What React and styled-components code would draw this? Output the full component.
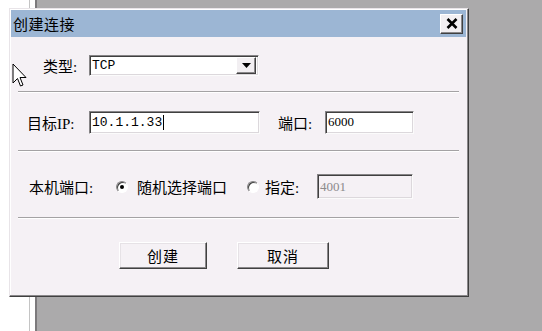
import styled, { createGlobalStyle } from "styled-components";

const Global = createGlobalStyle`
  html, body {
    margin: 0;
    padding: 0;
    background: #ffffff;
  }
  #root {
    width: 542px;
    height: 331px;
    overflow: hidden;
  }
`;

const Desktop = styled.div`
  position: relative;
  display: flex;
  width: 542px;
  height: 331px;
  background: #ffffff;
`;

const LeftPane = styled.div`
  width: 29px;
  border-right: 1px solid #c4c4c4;
  margin-right: 5px;
  background: #ffffff;
`;

const GrayPane = styled.div`
  flex: 1;
  border-left: 2px solid #7c7a7c;
  background: #abaaab;
`;

const Dialog = styled.div`
  position: absolute;
  left: 9px;
  top: 8px;
  width: 460px;
  height: 289px;
  box-sizing: border-box;
  display: flex;
  flex-direction: column;
  background: #f5f1f5;
  border: 1px solid;
  border-color: #e8e4e8 #404040 #404040 #e8e4e8;
  box-shadow: inset -1px -1px #8a888a, inset 1px 1px #ffffff;
  padding: 1px 2px 2px 1px;
  font-family: "Noto Sans CJK SC", "Liberation Sans", sans-serif;
  color: #000;
`;

const TitleBar = styled.div`
  height: 27px;
  display: flex;
  align-items: center;
  justify-content: space-between;
  background: #9cb6d4;
  padding: 0 3px 0 2px;
  font-size: 15px;
  letter-spacing: 0.5px;
`;

const CloseButton = styled.div`
  width: 23px;
  height: 20px;
  box-sizing: border-box;
  display: flex;
  align-items: center;
  justify-content: center;
  background: #f2eff2;
  border: 1px solid;
  border-color: #ffffff #404040 #404040 #ffffff;
  box-shadow: inset -1px -1px #8a888a;
  svg {
    display: block;
  }
`;

const Section = styled.div`
  height: ${(p) => p.$h}px;
  box-sizing: border-box;
  padding-top: ${(p) => p.$pt || 0}px;
  display: flex;
  align-items: center;
  padding-left: ${(p) => p.$pl || 0}px;
`;

const Separator = styled.div`
  margin: 0 7px;
  height: 1px;
  background: #a4a2a4;
  border-bottom: 1px solid #ffffff;
`;

const Label = styled.span`
  width: ${(p) => p.$w}px;
  margin-left: ${(p) => p.$ml || 0}px;
  flex: none;
  font-size: 15px;
  font-family: "Liberation Serif", "Noto Sans CJK SC", serif;
  white-space: nowrap;
  span {
    font-family: "Noto Sans CJK SC", sans-serif;
  }
`;

const Field = styled.div`
  width: ${(p) => p.$w}px;
  height: ${(p) => p.$h || 23}px;
  flex: none;
  box-sizing: border-box;
  display: flex;
  align-items: center;
  padding-left: 2px;
  background: ${(p) => (p.$disabled ? "#f5f1f5" : "#ffffff")};
  color: ${(p) => (p.$disabled ? "#8c8a8c" : "#000")};
  border: 1px solid;
  border-color: #868486 #fbfbfb #fbfbfb #868486;
  box-shadow: inset 1px 1px #404040, inset -1px -1px #dcd8dc;
  font-family: ${(p) => (p.$mono ? '"Liberation Mono", monospace' : '"Liberation Serif", serif')};
  font-size: 13px;
`;

const Caret = styled.span`
  display: inline-block;
  width: 1px;
  height: 15px;
  background: #000;
  margin-left: 1px;
`;

const SelectBox = styled(Field)`
  padding-right: 2px;
  justify-content: space-between;
`;

const DropButton = styled.div`
  width: 20px;
  height: 17px;
  box-sizing: border-box;
  display: flex;
  align-items: center;
  justify-content: center;
  background: #f2eff2;
  border: 1px solid;
  border-color: #ffffff #404040 #404040 #ffffff;
  box-shadow: inset -1px -1px #8a888a;
`;

const Radio = styled.span`
  width: 12px;
  height: 12px;
  flex: none;
  box-sizing: border-box;
  border-radius: 50%;
  border: 1px solid;
  border-color: #868486 #ffffff #ffffff #868486;
  background: #ffffff;
  box-shadow: inset 1px 1px #404040;
  display: flex;
  align-items: center;
  justify-content: center;
  margin-right: ${(p) => p.$mr}px;
  &::after {
    content: "";
    width: 4px;
    height: 4px;
    border-radius: 50%;
    background: ${(p) => (p.$on ? "#000" : "transparent")};
  }
`;

const ButtonRow = styled.div`
  display: flex;
  padding: 23px 0 0 108px;
  gap: 30px;
`;

const Button = styled.div`
  width: ${(p) => p.$w}px;
  height: 27px;
  box-sizing: border-box;
  display: flex;
  align-items: center;
  justify-content: center;
  background: #f5f1f5;
  border: 1px solid;
  border-color: #ffffff #404040 #404040 #ffffff;
  box-shadow: inset -1px -1px #8a888a, inset 1px 1px #e6e2e6;
  font-size: 15px;
  letter-spacing: 1px;
`;

const Cursor = styled.svg`
  position: absolute;
  left: 12px;
  top: 63px;
`;

export default function App() {
  return (
    <>
      <Global />
      <Desktop>
        <LeftPane />
        <GrayPane />
        <Dialog>
          <TitleBar>
            <span>创建连接</span>
            <CloseButton>
              <svg width="12" height="11" viewBox="0 0 12 11">
                <path d="M1.5 1 L10.5 10 M10.5 1 L1.5 10" stroke="#000" strokeWidth="2.6" />
              </svg>
            </CloseButton>
          </TitleBar>
          <Section $h={54} $pt={2} $pl={32}>
            <Label $w={46}>
              <span>类型</span>:
            </Label>
            <SelectBox $w={170} $h={21} $mono>
              <span>TCP</span>
              <DropButton>
                <svg width="9" height="5" viewBox="0 0 9 5">
                  <path d="M0 0 H9 L4.5 5 Z" fill="#000" />
                </svg>
              </DropButton>
            </SelectBox>
          </Section>
          <Separator />
          <Section $h={57} $pt={1} $pl={16}>
            <Label $w={62}>
              <span>目标</span>IP:
            </Label>
            <Field $w={171} $mono>
              10.1.1.33
              <Caret />
            </Field>
            <Label $w={47} $ml={18}>
              <span>端口</span>:
            </Label>
            <Field $w={89}>6000</Field>
          </Section>
          <Separator />
          <Section $h={65} $pt={4} $pl={18}>
            <Label $w={87}>
              <span>本机端口</span>:
            </Label>
            <Radio $on $mr={9} />
            <Label $w={110}>
              <span>随机选择端口</span>
            </Label>
            <Radio $mr={6} />
            <Label $w={52}>
              <span>指定</span>:
            </Label>
            <Field $w={96} $h={25} $disabled>
              4001
            </Field>
          </Section>
          <Separator />
          <ButtonRow>
            <Button $w={88}>创建</Button>
            <Button $w={92}>取消</Button>
          </ButtonRow>
        </Dialog>
        <Cursor width="15" height="25" viewBox="0 0 15 25">
          <path
            d="M1 1 L1 20 L5.5 15.5 L8.5 23 L11 22 L8 14.5 L14 14.5 Z"
            fill="#ffffff"
            stroke="#000"
            strokeWidth="1"
            strokeLinejoin="miter"
          />
        </Cursor>
      </Desktop>
    </>
  );
}
